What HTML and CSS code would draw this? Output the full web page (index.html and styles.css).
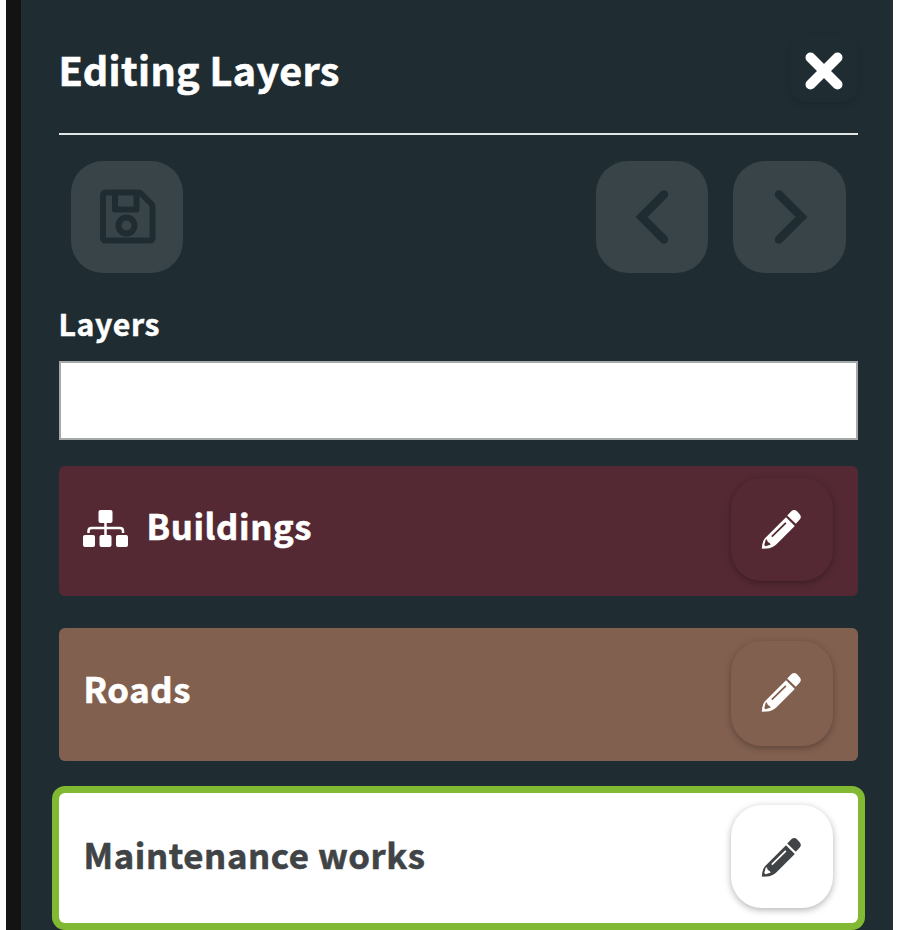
FILE: index.html
```
<!DOCTYPE html>
<html lang="en">
<head>
<meta charset="utf-8">
<title>Editing Layers</title>
<link rel="stylesheet" href="styles.css">
</head>
<body>
<svg class="defs" width="0" height="0">
  <symbol id="pencil" viewBox="0 0 40 40">
    <path fill="currentColor" fill-rule="evenodd" d="M25 8.200 33.800 17 15.500 35.200Q11.500 39.300 5.500 39.500L.8 39.700Q1.200 31.500 5 28.300ZM24.200 13.200 10.200 27 11.400 28.200 25.500 14.400ZM5 29.800 3.300 36 4.600 37.200 9.800 35.500Q8.800 33.500 6.900 32.900Q6.300 31 5 29.800Z"/>
    <path fill="currentColor" d="M26.200 6.500 30.600 2Q33.300 -.3 36 2.300L38.700 5.200Q41 8 38.700 10.500L34.800 14.800Z"/>
  </symbol>
</svg>
<main class="panel">
  <header class="header">
    <h1 class="title">Editing Layers</h1>
    <button class="close" aria-label="Close">
      <svg width="38" height="38" viewBox="0 0 38 38"><path d="M5.500 5.500 32.500 32.500M32.500 5.500 5.500 32.500" stroke="#fff" stroke-width="10" stroke-linecap="round"/></svg>
    </button>
  </header>
  <div class="toolbar">
    <button class="tool save" aria-label="Save">
      <svg width="58" height="58" viewBox="0 0 58 58" fill="none" stroke="currentColor" stroke-width="6" stroke-linejoin="round"><path d="M8 4.500H40.500Q42 4.500 43 5.500L53.500 16Q54.500 17 54.500 18.500V49.500Q54.500 52.500 51.500 52.500H8Q5 52.500 5 49.500V7.500Q5 4.500 8 4.500Z"/><path d="M17 5V21.500H38.500V5"/><circle cx="28.500" cy="37.500" r="8"/></svg>
    </button>
    <button class="tool" aria-label="Previous">
      <svg width="58" height="58" viewBox="0 0 58 58" fill="none" stroke="currentColor" stroke-width="8.500" stroke-linecap="round"><path d="M41 6.500 18.500 29 41 51.500"/></svg>
    </button>
    <button class="tool" aria-label="Next">
      <svg width="58" height="58" viewBox="0 0 58 58" fill="none" stroke="currentColor" stroke-width="8.500" stroke-linecap="round"><path d="M19 6.500 41.500 29 19 51.500"/></svg>
    </button>
  </div>
  <label class="label" for="filter">Layers</label>
  <input class="filter" id="filter" type="text">
  <ul class="layers">
    <li class="layer buildings">
      <svg class="tree" width="45" height="37" viewBox="0 0 45 37"><path d="M22.500 10V27M5.500 23V21Q5.500 18 8.500 18H37Q40 18 40 21V23" fill="none" stroke="#fff" stroke-width="2.500"/><g fill="#fff"><rect x="15.500" y="0" width="14" height="13" rx="2"/><rect x="0" y="25" width="12" height="12" rx="2"/><rect x="16.500" y="25" width="12" height="12" rx="2"/><rect x="33" y="25" width="12" height="12" rx="2"/></g></svg>
      <span class="name">Buildings</span>
      <button class="edit" aria-label="Edit"><svg width="40" height="40"><use href="#pencil"/></svg></button>
    </li>
    <li class="layer roads">
      <span class="name">Roads</span>
      <button class="edit" aria-label="Edit"><svg width="40" height="40"><use href="#pencil"/></svg></button>
    </li>
    <li class="layer works">
      <span class="name">Maintenance works</span>
      <button class="edit" aria-label="Edit"><svg width="40" height="40"><use href="#pencil"/></svg></button>
    </li>
  </ul>
</main>
</body>
</html>
```

FILE: styles.css
```
* { box-sizing: border-box; }
html, body { height: 930px; overflow: hidden; }
body {
  margin: 0;
  padding: 0 7px 0 6px;
  background: #fcfcff;
  font-family: "Noto Sans CJK SC", "Noto Sans", sans-serif;
  font-weight: 700;
  color: #fff;
}
.defs { display: none; }
button { border: 0; padding: 0; background: none; color: inherit; display: flex; align-items: center; justify-content: center; flex: none; }
svg { display: block; overflow: visible; }
.panel { height: 930px; background: #1f2d32; border-left: 15px solid #131313; padding: 0 35.5px 0 37.5px; }
.header { height: 135px; border-bottom: 2px solid #e4e6e6; display: flex; justify-content: space-between; padding-top: 33px; }
.title { margin: 0; font-size: 39.5px; line-height: 71px; letter-spacing: .4px; white-space: nowrap; -webkit-text-stroke: .6px currentColor; }
.close { width: 68px; height: 66px; border-radius: 18px; box-shadow: 0 3px 7px rgba(0, 0, 0, .14); margin-top: 3px; }
.close svg { margin-top: 3px; }
.toolbar { display: flex; gap: 25px; padding: 25.5px 12px 0; }
.save { margin-right: auto; }
.tool { width: 112.5px; height: 112.5px; border-radius: 32px; background: #384448; color: #1f2d32; }
.label { display: block; margin-top: 26px; height: 62px; font-size: 30.2px; line-height: 48px; letter-spacing: .65px; -webkit-text-stroke: .5px currentColor; }
.filter { display: block; width: 100%; height: 79px; border: 2px solid #a5a9a9; border-radius: 0; background: #fff; padding: 0 16px; font-size: 31px; }
.layers { list-style: none; margin: 26px 0 0; padding: 0; display: grid; grid-template-rows: 129.5px 132.500px 130px; row-gap: 32.5px; }
.layer { display: flex; align-items: center; padding: 0 25px 3px; border-radius: 6px; }
.buildings { background: #542933; }
.roads { background: #826050; padding-bottom: 2px; }
.works { background: #fff; color: #414446; box-shadow: 0 0 0 7px #82b933; }
.tree { margin-right: 18.5px; margin-left: -.5px; margin-top: -2px; }
.name { font-size: 34.7px; line-height: 54px; letter-spacing: .6px; padding-bottom: 8px; white-space: nowrap; -webkit-text-stroke: .6px currentColor; }
.roads .name { padding-bottom: 10px; }
.works .name { padding-bottom: 6px; }
.edit { width: 102px; height: 103px; border-radius: 31px; margin-left: auto; box-shadow: 0 2px 7px rgba(0, 0, 0, .3); }
.edit svg { margin-right: 2px; }
.roads .edit { height: 105px; padding-bottom: 3px; }
```
